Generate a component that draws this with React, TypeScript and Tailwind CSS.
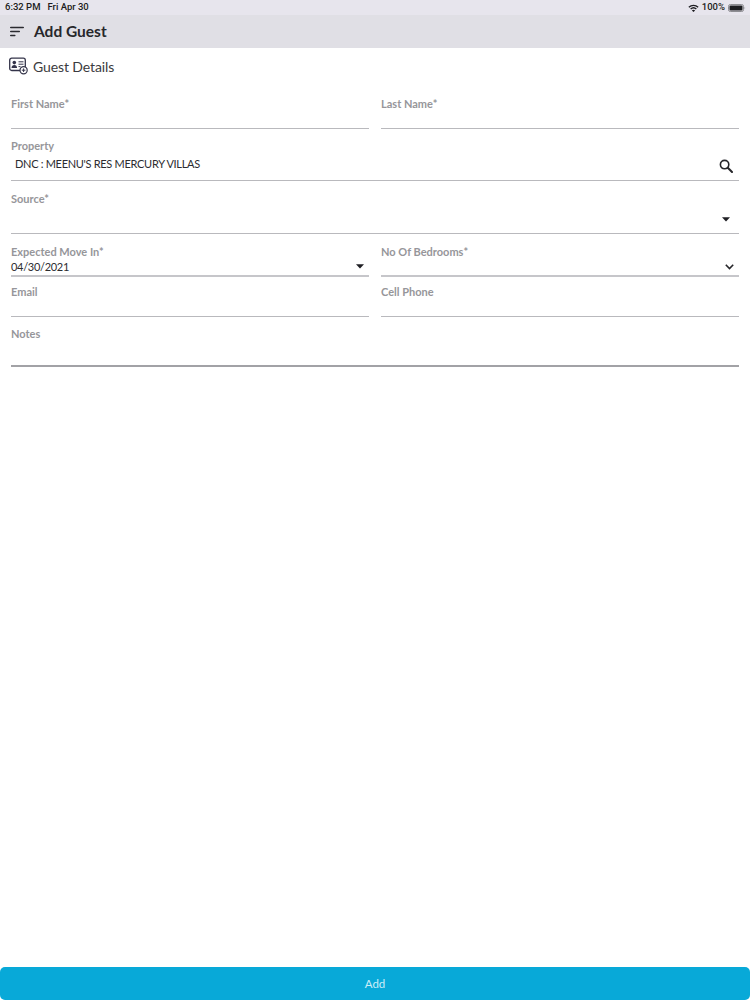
import React from "react";

const font = { fontFamily: "Lato, 'Noto Sans', sans-serif" };

function Caret() {
  return (
    <svg width="8" height="5" viewBox="0 0 8 5" className="block">
      <path d="M0 0.3h8L4 4.6z" fill="#1f1f24" />
    </svg>
  );
}

function Field({
  label,
  value,
  valueClass = "bottom-[1px] left-0",
  right,
  className,
  line = "border-b border-[#b9b9bd]",
}: {
  label: string;
  value?: string;
  valueClass?: string;
  right?: React.ReactNode;
  className: string;
  line?: string;
}) {
  return (
    <div className={`relative min-w-0 flex-1 ${line} ${className}`}>
      <div className="text-[11px] leading-[14px] font-bold text-[#96969a]">{label}</div>
      {value && <div className={`absolute text-[11px] leading-[14px] tracking-[-0.3px] text-[#2c2c30] ${valueClass}`}>{value}</div>}
      {right && <div className="absolute right-0 bottom-0 flex items-center">{right}</div>}
    </div>
  );
}

export default function App() {
  return (
    <div className="flex h-[1000px] w-[750px] flex-col overflow-hidden bg-white" style={font}>
      <div className="flex h-[15px] items-center justify-between bg-[#e7e5ed] pr-[4px] pl-[5px] text-[9.5px] font-medium text-[#1c1c20]" style={{ fontFamily: "Roboto, sans-serif" }}>
        <div className="flex gap-[7px]">
          <span>6:32 PM</span>
          <span>Fri Apr 30</span>
        </div>
        <div className="flex items-center gap-[3px]">
          <svg width="11" height="8" viewBox="0 0 11 8">
            <path d="M0.4 2.7a7.4 7.4 0 0 1 10.2 0l-.9 1a6 6 0 0 0-8.4 0z M2.2 4.6a4.8 4.8 0 0 1 6.6 0l-.9 1a3.4 3.4 0 0 0-4.8 0z M3.9 6.4a2.3 2.3 0 0 1 3.2 0L5.5 8z" fill="#1c1c20" />
          </svg>
          <span>100%</span>
          <svg width="18" height="8" viewBox="0 0 18 8">
            <rect x="0.5" y="0.5" width="15" height="7" rx="1.8" fill="none" stroke="#8d8d92" />
            <rect x="1.5" y="1.5" width="13" height="5" rx="1" fill="#1c1c20" />
            <path d="M16.6 2.8c.7.2.7 2.2 0 2.4z" fill="#8d8d92" />
          </svg>
        </div>
      </div>

      <div className="flex h-[33px] items-center bg-[#e0dfe5] pl-[10px]">
        <svg width="14" height="11" viewBox="0 0 14 11" className="mr-[10px]">
          <path d="M0.7 1.5h12.6M0.7 5.5h8.6M0.7 9.5h4.1" stroke="#2a2a30" strokeWidth="1.5" strokeLinecap="round" fill="none" />
        </svg>
        <span className="text-[15.5px] font-bold text-[#27272b]">Add Guest</span>
      </div>

      <div className="flex h-[37px] items-center pb-[1px] pl-[9px]">
        <svg width="19" height="18" viewBox="0 0 19 18" className="mr-[5px]">
          <rect x="0.7" y="1.2" width="15.6" height="12.3" rx="2" fill="none" stroke="#34344a" strokeWidth="1.3" />
          <circle cx="5.3" cy="5.6" r="1.8" fill="#34344a" />
          <path d="M2.5 11c0-2 1.2-3 2.8-3s2.8 1 2.8 3z" fill="#34344a" />
          <path d="M9.5 4.8h5M9.5 7.2h5M9.5 9.6h2" stroke="#34344a" strokeWidth="1" fill="none" />
          <circle cx="14.6" cy="13.2" r="3.6" fill="white" stroke="#34344a" strokeWidth="1.2" />
          <path d="M14.6 11.4v3.6M12.8 13.2h3.6" stroke="#34344a" strokeWidth="1" fill="none" />
        </svg>
        <span className="text-[14px] tracking-[-0.1px] text-[#3b3b40]">Guest Details</span>
      </div>

      <div className="flex flex-col px-[11px]">
        <div className="flex gap-[12px] pt-[12px]">
          <Field label="First Name*" className="h-[32px]" />
          <Field label="Last Name*" className="h-[32px]" />
        </div>
        <div className="pt-[10px]">
          <Field
            label="Property"
            value="DNC : MEENU'S RES MERCURY VILLAS"
            valueClass="bottom-[9px] left-[4px]"
            className="block h-[42px]"
            right={
              <svg width="14" height="14" viewBox="0 0 14 14" className="mr-[6px] mb-[7px]">
                <circle cx="5.6" cy="5.6" r="4.2" fill="none" stroke="#26262a" strokeWidth="1.6" />
                <path d="M8.8 8.8l4.2 4.2" stroke="#26262a" strokeWidth="2" strokeLinecap="round" fill="none" />
              </svg>
            }
          />
        </div>
        <div className="pt-[11px]">
          <Field label="Source*" className="block h-[42px]" right={<span className="mr-[9px] mb-[11px]"><Caret /></span>} />
        </div>
        <div className="flex gap-[12px] pt-[11px]">
          <Field label="Expected Move In*" value="04/30/2021" className="h-[32px]" line="border-b-2 border-[#c6c6ca]" right={<span className="mr-[5px] mb-[6px]"><Caret /></span>} />
          <Field
            label="No Of Bedrooms*"
            className="h-[32px]"
            line="border-b-2 border-[#c6c6ca]"
            right={
              <svg width="9" height="6" viewBox="0 0 9 6" className="mr-[5px] mb-[5px]">
                <path d="M0.8 0.8L4.5 4.5L8.2 0.8" stroke="#26262a" strokeWidth="1.6" fill="none" />
              </svg>
            }
          />
        </div>
        <div className="flex gap-[12px] pt-[8px]">
          <Field label="Email" className="h-[32px]" />
          <Field label="Cell Phone" className="h-[32px]" />
        </div>
        <div className="pt-[10px]">
          <Field label="Notes" className="block h-[40px]" line="border-b-2 border-[#a2a2a6]" />
        </div>
      </div>

      <div className="mt-auto flex h-[33px] items-center justify-center rounded-[5px] bg-[#08a9d8] text-[11.5px] text-[#cdeef8]">Add</div>
    </div>
  );
}
